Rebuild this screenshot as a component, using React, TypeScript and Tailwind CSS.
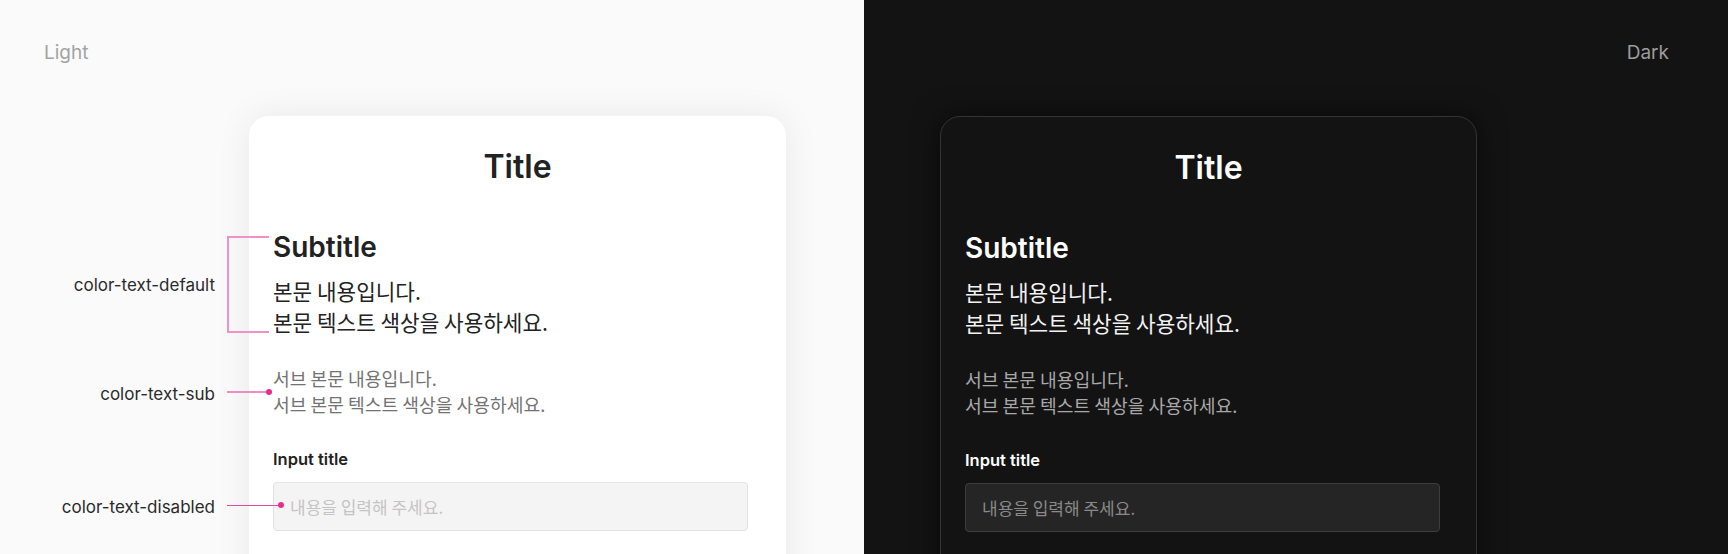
import React from "react";

const INTER = "font-['Inter','Noto_Sans_CJK_KR',sans-serif]";
const KR = "font-['Noto_Sans_CJK_KR','Inter',sans-serif]";

function Card({ dark }: { dark: boolean }) {
  return (
    <div
      className={
        "w-[537px] h-[600px] shrink-0 rounded-[20px] pt-[35px] pl-6 " +
        (dark
          ? "bg-[#141314] border border-[#353435] shadow-[0_0_28px_rgba(0,0,0,0.55)]"
          : "bg-white shadow-[0_0_36px_rgba(0,0,0,0.07)]")
      }
    >
      <div
        className={
          INTER +
          " text-center pr-6 text-[32px] leading-none font-semibold " +
          (dark ? "text-white" : "text-[#222222]")
        }
      >
        Title
      </div>
      <div
        className={
          INTER +
          " mt-[50px] text-[28px] leading-none font-semibold " +
          (dark ? "text-white" : "text-[#222222]")
        }
      >
        Subtitle
      </div>
      <div
        className={
          KR +
          " mt-[14px] text-[21.3px] leading-[31px] " +
          (dark ? "text-[#f2f2f2]" : "text-[#222222]")
        }
      >
        <div>본문 내용입니다.</div>
        <div>본문 텍스트 색상을 사용하세요.</div>
      </div>
      <div
        className={
          KR +
          " mt-[28px] text-[18.2px] leading-[26px] " +
          (dark ? "text-[#a8a8a8]" : "text-[#737373]")
        }
      >
        <div>서브 본문 내용입니다.</div>
        <div>서브 본문 텍스트 색상을 사용하세요.</div>
      </div>
      <div
        className={
          INTER +
          " mt-[34px] text-[16.5px] leading-none font-semibold " +
          (dark ? "text-white" : "text-[#222222]")
        }
      >
        Input title
      </div>
      <div
        className={
          "mt-[14px] w-[475px] h-[49px] rounded-[4px] border flex items-center pl-4 " +
          (dark ? "bg-[#252525] border-[#3d3d3d]" : "bg-[#f4f4f4] border-[#e3e3e3]")
        }
      >
        <span
          className={
            KR +
            " text-[17px] leading-none " +
            (dark ? "text-[#8a8a8a]" : "text-[#c4c4c4]")
          }
        >
          내용을 입력해 주세요.
        </span>
      </div>
    </div>
  );
}

export default function App() {
  return (
    <div className="flex w-[1728px] h-[554px] overflow-hidden">
      {/* Light */}
      <div className="relative w-[864px] h-[554px] overflow-hidden bg-[#fafafa] flex flex-col">
        <div className={INTER + " pt-[43px] pl-[44px] h-[60px] text-[19px] leading-none text-[#a3a3a3]"}>
          Light
        </div>
        <div className="mt-[56px] pl-[249px] flex">
          <Card dark={false} />
        </div>

        {/* annotations */}
        <div className={INTER + " absolute left-0 top-[277px] w-[215px] text-right text-[17px] leading-none text-[#2a2a2a]"}>
          color-text-default
        </div>
        <div className={INTER + " absolute left-0 top-[386px] w-[215px] text-right text-[17px] leading-none text-[#2a2a2a]"}>
          color-text-sub
        </div>
        <div className={INTER + " absolute left-0 top-[499px] w-[215px] text-right text-[17px] leading-none text-[#2a2a2a]"}>
          color-text-disabled
        </div>

        <div className="absolute left-[227px] top-[236px] w-[42px] h-[97px] border-l-2 border-y-2 border-[#f091c8]" />

        <div className="absolute left-[227px] top-[391px] w-[41px] h-[2px] bg-[#f08cc5]" />
        <div className="absolute left-[266px] top-[389px] w-[6px] h-[6px] rounded-full bg-[#e3308c]" />

        <div className="absolute left-[227px] top-[505px] w-[53px] h-[1px] bg-[#e5489e]" />
        <div className="absolute left-[278px] top-[502px] w-[6px] h-[6px] rounded-full bg-[#e3308c]" />
      </div>

      {/* Dark */}
      <div className="relative w-[864px] h-[554px] overflow-hidden bg-[#141314] flex flex-col">
        <div className={INTER + " pt-[43px] pr-[59px] h-[60px] text-right text-[19px] leading-none text-[#9c9c9c]"}>
          Dark
        </div>
        <div className="mt-[56px] pl-[76px] flex">
          <Card dark={true} />
        </div>
      </div>
    </div>
  );
}
